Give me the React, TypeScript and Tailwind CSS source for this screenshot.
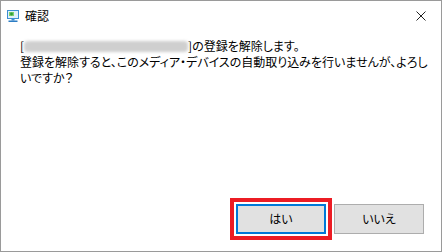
export default function App() {
  const font = { fontFamily: '"Noto Sans CJK JP", "Noto Sans", sans-serif' }

  return (
    <div
      className="w-[442px] h-[252px] bg-white border border-[#9a9a9a] flex flex-col text-black [font-feature-settings:'palt']"
      style={font}
    >
      {/* title bar */}
      <div className="h-[29px] flex items-center shrink-0">
        <div className="w-[31px] pl-[6px] flex items-center">
          <svg width="12" height="12" viewBox="0 0 12 12">
            <rect x="0.5" y="0.5" width="11" height="8" fill="#dff1fb" stroke="#3c8fd3" />
            <rect x="2" y="2" width="5" height="4" fill="#7fd06f" />
            <circle cx="4.5" cy="4" r="1.4" fill="#2f9d3a" />
            <rect x="4.5" y="9" width="3" height="1.5" fill="#3c8fd3" />
            <rect x="1.5" y="10.5" width="9" height="1.5" fill="#2c7dc4" />
          </svg>
        </div>
        <span className="-ml-[7px] text-[12px] leading-none">確認</span>
        <div className="ml-auto w-[34px] flex justify-center pr-[6px]">
          <svg width="10" height="10" viewBox="0 0 10 10">
            <path d="M0.5 0.5 L9.5 9.5 M9.5 0.5 L0.5 9.5" stroke="#222" strokeWidth="1" />
          </svg>
        </div>
      </div>

      {/* message */}
      <div className="pl-[19px] pr-[12px] pt-[8px] text-[12px] leading-[16px]">
        <p className="flex items-center">
          <span>[</span>
          <span className="inline-block w-[164px] h-[11px] bg-[#cfcfcf] blur-[1.5px] rounded-sm" />
          <span>]の登録を解除します。</span>
        </p>
        <p>
          登録を解除すると、このメディア・デバイスの自動取り込みを行いませんが、よろし
          <br />
          いですか？
        </p>
      </div>

      {/* buttons */}
      <div className="mt-auto flex justify-end gap-[8px] pr-[17px] pb-[17px]">
        <button className="w-[90px] h-[30px] bg-[#e1e1e1] border-2 border-[#0078d7] text-[12px] outline-4 outline-offset-[2px] outline-[#ec1c24]">
          はい
        </button>
        <button className="w-[90px] h-[30px] bg-[#e1e1e1] border border-[#adadad] text-[12px]">
          いいえ
        </button>
      </div>
    </div>
  )
}
